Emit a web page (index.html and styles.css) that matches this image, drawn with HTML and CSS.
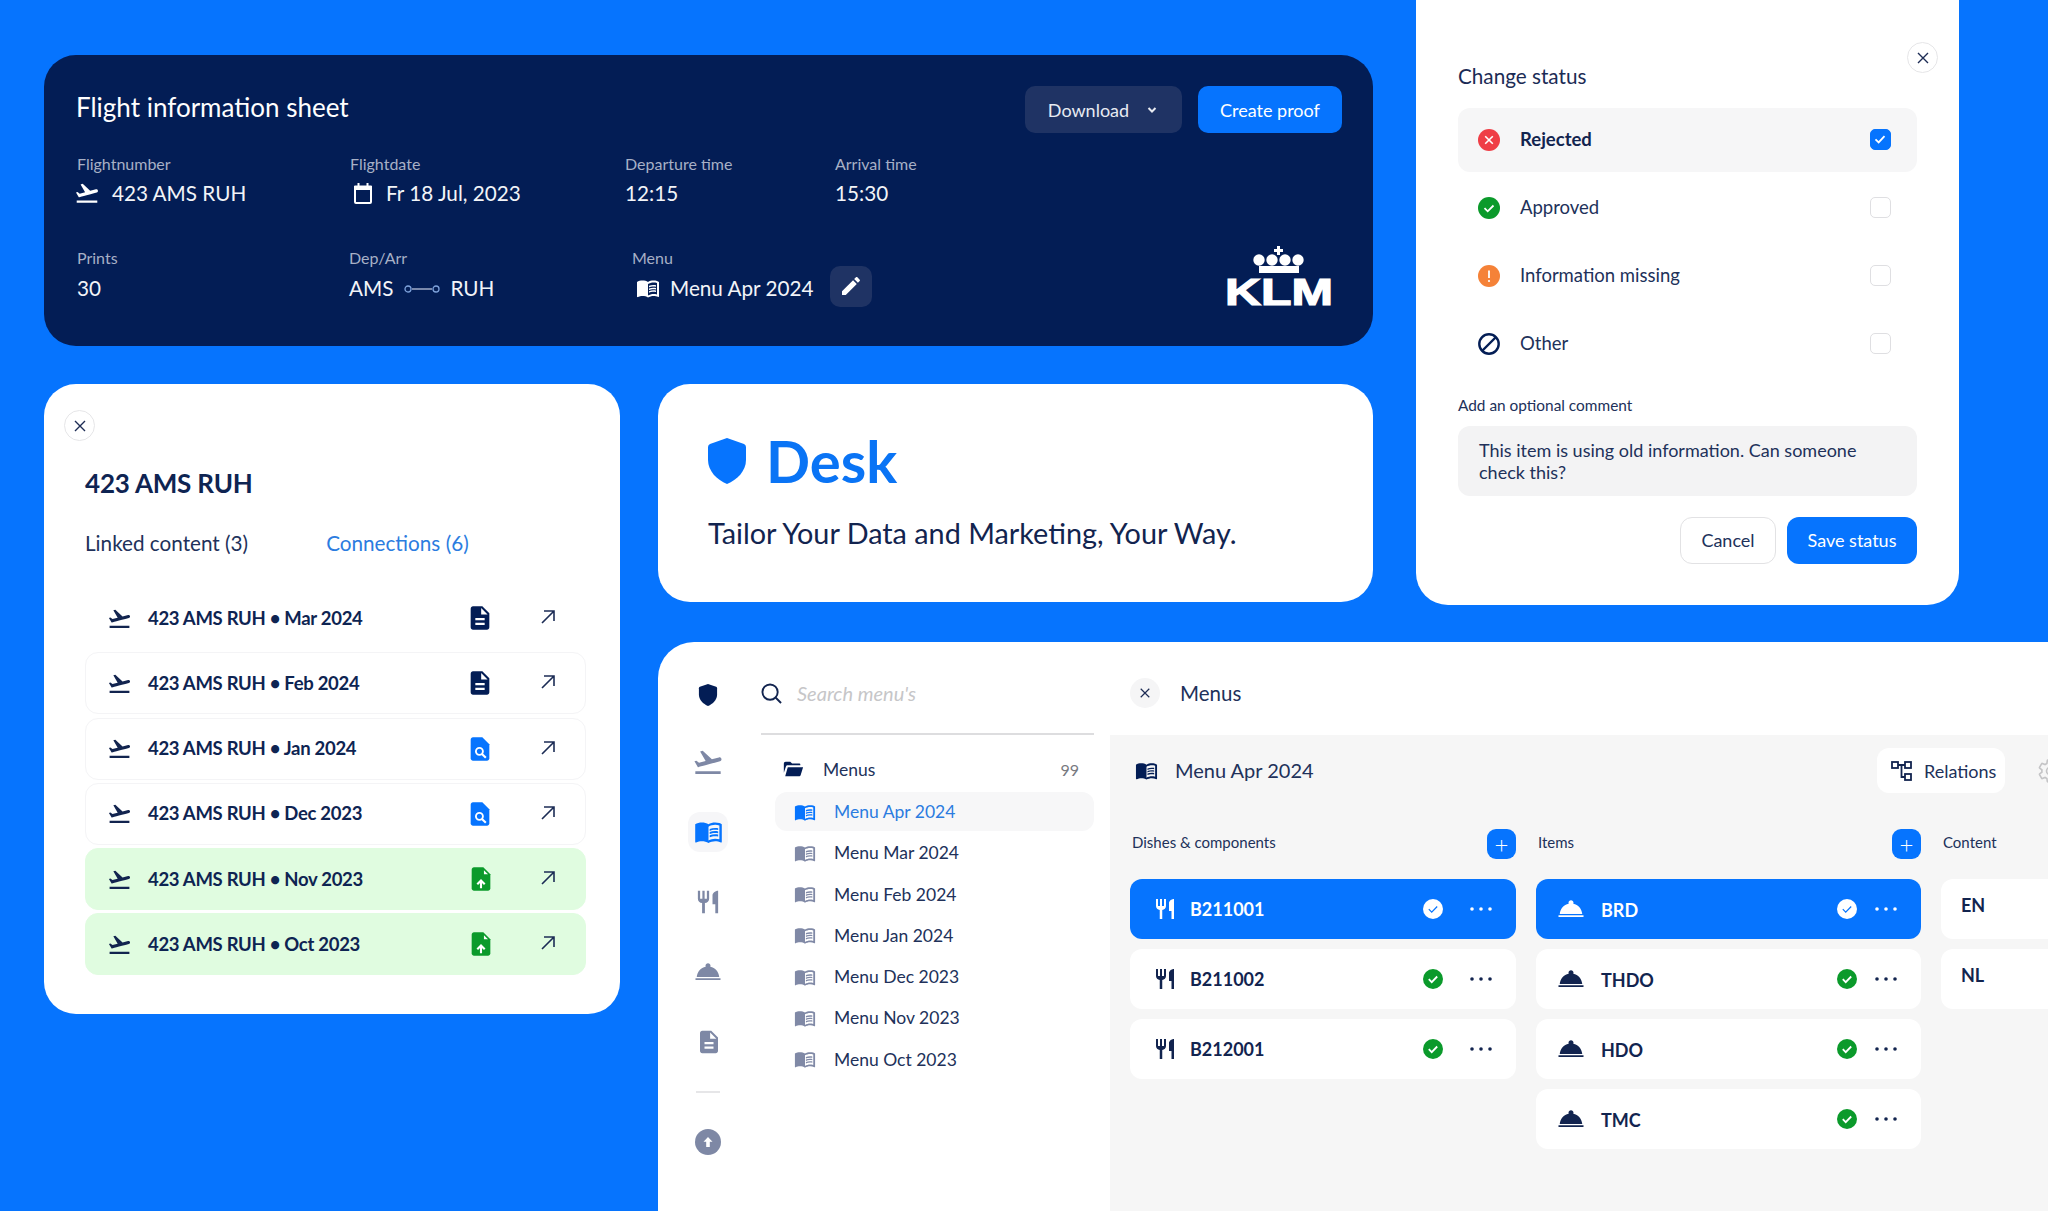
FILE: index.html
```html
<!DOCTYPE html>
<html lang="en">
<head>
    <meta charset="UTF-8">
    <meta name="viewport" content="width=device-width, initial-scale=1.0">
    <title>Desk</title>
    <link rel="stylesheet" href="styles.css">
</head>
<body>
    <svg class="sprite" xmlns="http://www.w3.org/2000/svg">
        <symbol id="i-plane" viewBox="0 0 24 24"><path d="M2.5 19h19v2h-19zm19.57-9.36c-.21-.8-1.04-1.28-1.84-1.06L14.92 10l-6.9-6.43-1.93.51 4.14 7.17-4.97 1.33-1.97-1.54-1.45.39 2.59 4.49s7.12-1.9 16.57-4.43c.81-.23 1.28-1.05 1.07-1.85z"/></symbol>
        <symbol id="i-book" viewBox="0 0 24 24"><path d="M21 5c-1.11-.35-2.33-.5-3.5-.5-1.95 0-4.05.4-5.5 1.5-1.45-1.1-3.55-1.5-5.5-1.5S2.45 4.9 1 6v14.65c0 .25.25.5.5.5.1 0 .15-.05.25-.05C3.1 20.45 5.05 20 6.5 20c1.95 0 4.05.4 5.5 1.5 1.35-.85 3.8-1.5 5.5-1.5 1.65 0 3.35.3 4.75 1.05.1.05.15.05.25.05.25 0 .5-.25.5-.5V6c-.6-.45-1.25-.75-2-1zm0 13.5c-1.1-.35-2.3-.5-3.5-.5-1.7 0-4.15.65-5.5 1.5V8c1.35-.85 3.8-1.5 5.5-1.5 1.2 0 2.4.15 3.5.5v11.5z"/><path d="M17.5 10.5c.88 0 1.73.09 2.5.26V9.24c-.79-.15-1.64-.24-2.5-.24-1.7 0-3.24.29-4.5.83v1.66c1.13-.64 2.7-.99 4.5-.99zM13 12.49v1.66c1.13-.64 2.7-.99 4.5-.99.88 0 1.73.09 2.5.26V11.9c-.79-.15-1.64-.24-2.5-.24-1.7 0-3.24.3-4.5.83zM17.5 14.33c-1.7 0-3.24.29-4.5.83v1.66c1.13-.64 2.7-.99 4.5-.99.88 0 1.73.09 2.5.26v-1.52c-.79-.16-1.64-.24-2.5-.24z"/></symbol>
        <symbol id="i-fork" viewBox="0 0 24 24"><path d="M11 9H9V2H7v7H5V2H3v7c0 2.12 1.66 3.84 3.75 3.97V22h2.5v-9.03C11.34 12.84 13 11.12 13 9V2h-2v7zm5-3v8h2.5v8H21V2c-2.76 0-5 2.24-5 4z"/></symbol>
        <symbol id="i-cloche" viewBox="0 0 24 24"><path d="M2 17h20v1.4H2zm11.84-9.21c.1-.24.16-.51.16-.79 0-1.1-.9-2-2-2s-2 .9-2 2c0 .28.06.55.16.79C6.25 8.6 3.27 11.93 3 16h18c-.27-4.07-3.25-7.4-7.16-8.21z"/></symbol>
        <symbol id="i-doc" viewBox="0 0 24 24"><path d="M14 2H6c-1.1 0-1.99.9-1.99 2L4 20c0 1.1.89 2 1.99 2H18c1.1 0 2-.9 2-2V8l-6-6zm2 16H8v-2h8v2zm0-4H8v-2h8v2zm-3-5V3.5L18.5 9H13z"/></symbol>
        <symbol id="i-find" viewBox="0 0 24 24"><path d="M14 2H6c-1.1 0-2 .9-2 2v16c0 1.100.9 2 2 2h12c1.100 0 2-.9 2-2V8z"/><circle cx="11.500" cy="14" r="3" fill="none" stroke="#fff" stroke-width="1.600"/><path d="M13.700 16.200l3.300 3.300" stroke="#fff" stroke-width="1.800"/></symbol>
        <symbol id="i-upfile" viewBox="0 0 24 24"><path d="M14 2H6c-1.100 0-2 .9-2 2v16c0 1.100.9 2 2 2h12c1.100 0 2-.9 2-2V8z"/><path d="M14.500 4.500V8h3.500z" fill="#fff"/><path d="M12 20v-6.500M8.800 16.500l3.200-3.200 3.200 3.200" fill="none" stroke="#fff" stroke-width="1.800"/></symbol>
        <symbol id="i-arrow" viewBox="0 0 16 16"><path d="M2 14L14 2M4 2h10v10" fill="none" stroke="currentColor" stroke-width="1.6"/></symbol>
        <symbol id="i-close" viewBox="0 0 14 14"><path d="M2 2l10 10M12 2L2 12" fill="none" stroke="currentColor" stroke-width="1.4"/></symbol>
        <symbol id="i-dots" viewBox="0 0 22 4"><circle cx="2" cy="2" r="1.8"/><circle cx="11" cy="2" r="1.8"/><circle cx="20" cy="2" r="1.8"/></symbol>
        <symbol id="i-shield" viewBox="0 0 38 46"><path d="M19 0L36 6Q38 7 38 9V22C38 33 29 42 19 46C9 42 0 33 0 22V9Q0 7 2 6Z"/></symbol>
        <symbol id="i-folder" viewBox="0 0 24 24"><path d="M2 6c0-1.100.9-2 2-2h5l2 2h8c.6 0 1 .4 1 1v1H6.200c-.9 0-1.600.5-1.900 1.400L2 16z"/><path d="M6.300 10H23l-2.600 8.500c-.2.900-1 1.500-1.900 1.500H3.500z"/></symbol>
        <symbol id="i-check" viewBox="0 0 20 20"><circle class="check-disc" cx="10" cy="10" r="10"/><path class="check-mark" d="M5.800 10.200l2.900 2.900 5.500-5.600" fill="none"/></symbol>
    </svg>

    <div class="canvas">
        <section class="flight-card">
            <div class="flight-head">
                <h1 class="flight-title">Flight information sheet</h1>
                <div class="flight-actions">
                    <button class="btn btn-dark">Download
                        <svg class="chevron" viewBox="0 0 10 8"><path d="M1.500 2l3.500 3.500L8.500 2" fill="none" stroke="currentColor" stroke-width="2"/></svg>
                    </button>
                    <button class="btn btn-blue btn-proof">Create proof</button>
                </div>
            </div>
            <div class="meta-row meta-row-top">
                <div class="meta meta-number">
                    <div class="meta-label">Flightnumber</div>
                    <div class="meta-value"><svg class="meta-icon"><use href="#i-plane"/></svg>423 AMS RUH</div>
                </div>
                <div class="meta meta-date">
                    <div class="meta-label">Flightdate</div>
                    <div class="meta-value">
                        <svg class="meta-cal" viewBox="0 0 20 22"><path d="M2 5h16v15a1 1 0 0 1-1 1H3a1 1 0 0 1-1-1z" fill="none" stroke="currentColor" stroke-width="2"/><path d="M1 4.500a1 1 0 0 1 1-1h16a1 1 0 0 1 1 1V8H1z" fill="currentColor"/><path d="M5.500 1v3M14.500 1v3" stroke="currentColor" stroke-width="2"/></svg>
                        Fr 18 Jul, 2023
                    </div>
                </div>
                <div class="meta meta-dep">
                    <div class="meta-label">Departure time</div>
                    <div class="meta-value">12:15</div>
                </div>
                <div class="meta">
                    <div class="meta-label">Arrival time</div>
                    <div class="meta-value">15:30</div>
                </div>
            </div>
            <div class="meta-row meta-row-bottom">
                <div class="meta meta-prints">
                    <div class="meta-label">Prints</div>
                    <div class="meta-value">30</div>
                </div>
                <div class="meta meta-deparr">
                    <div class="meta-label">Dep/Arr</div>
                    <div class="meta-value">AMS
                        <svg class="route" viewBox="0 0 36 10"><path d="M8 5h20" stroke="#c9d2e6" stroke-width="1.200"/><circle cx="4" cy="5" r="3" fill="none" stroke="#7fa3dc" stroke-width="1.300"/><circle cx="32" cy="5" r="3" fill="none" stroke="#7fa3dc" stroke-width="1.300"/></svg>
                        RUH
                    </div>
                </div>
                <div class="meta">
                    <div class="meta-label">Menu</div>
                    <div class="meta-value">
                        <svg class="meta-book"><use href="#i-book"/></svg>Menu Apr 2024
                        <button class="edit-btn"><svg viewBox="0 0 24 24"><path d="M3 17.250V21h3.750L17.810 9.940l-3.750-3.750L3 17.250zM20.710 7.040c.39-.39.39-1.020 0-1.410l-2.340-2.340c-.39-.39-1.020-.39-1.410 0l-1.830 1.830 3.750 3.750 1.830-1.830z"/></svg></button>
                    </div>
                </div>
                <svg class="klm-logo" viewBox="-3 0 112 72">
                    <path d="M51 1h3v3h3v3h-3v3h-3V7h-3V4h3z"/>
                    <circle cx="33" cy="15" r="5.700"/><circle cx="46" cy="15" r="5.700"/><circle cx="59" cy="15" r="5.700"/><circle cx="72" cy="15" r="5.700"/>
                    <rect x="33" y="21" width="40" height="7"/>
                    <text class="klm-text" x="-1" y="60" textLength="108" lengthAdjust="spacingAndGlyphs">KLM</text>
                </svg>
            </div>
        </section>

        <section class="status-card">
            <button class="round-close status-close"><svg><use href="#i-close"/></svg></button>
            <h2 class="status-title">Change status</h2>
            <div class="status-list">
                <div class="status-row is-selected">
                    <svg class="status-icon" viewBox="0 0 22 22"><circle cx="11" cy="11" r="11" fill="#ef3e46"/><path d="M7.200 7.200l7.600 7.600M14.800 7.200l-7.600 7.600" stroke="#fff" stroke-width="1.600"/></svg>
                    <span class="status-name">Rejected</span>
                    <span class="checkbox is-checked"><svg viewBox="0 0 20 20"><path d="M5 10.500l3.500 3.300L15 6.800" fill="none" stroke="#fff" stroke-width="2"/></svg></span>
                </div>
                <div class="status-row">
                    <svg class="status-icon" viewBox="0 0 22 22"><circle cx="11" cy="11" r="11" fill="#0b9a2b"/><path d="M6.500 11.200l3.200 3.100 5.800-5.800" fill="none" stroke="#fff" stroke-width="1.800"/></svg>
                    <span class="status-name">Approved</span>
                    <span class="checkbox"></span>
                </div>
                <div class="status-row">
                    <svg class="status-icon" viewBox="0 0 22 22"><circle cx="11" cy="11" r="11" fill="#f58238"/><path d="M11 5.500v7.500" stroke="#fff" stroke-width="1.800"/><circle cx="11" cy="16" r="1.100" fill="#fff"/></svg>
                    <span class="status-name">Information missing</span>
                    <span class="checkbox"></span>
                </div>
                <div class="status-row">
                    <svg class="status-icon" viewBox="0 0 22 22"><circle cx="11" cy="11" r="9.700" fill="none" stroke="#031d55" stroke-width="2.400"/><path d="M4.500 17.500l13-13" stroke="#031d55" stroke-width="2.400"/></svg>
                    <span class="status-name">Other</span>
                    <span class="checkbox"></span>
                </div>
            </div>
            <div class="comment-label">Add an optional comment</div>
            <div class="comment-box">This item is using old information. Can someone check this?</div>
            <div class="status-actions">
                <button class="btn btn-outline">Cancel</button>
                <button class="btn btn-blue btn-save">Save status</button>
            </div>
        </section>

        <section class="linked-card">
            <button class="round-close linked-close"><svg><use href="#i-close"/></svg></button>
            <h2 class="linked-title">423 AMS RUH</h2>
            <div class="linked-tabs">
                <span>Linked content (3)</span>
                <span class="tab-active">Connections (6)</span>
            </div>
            <div class="linked-list">
                <div class="linked-row is-plain">
                    <svg class="linked-plane"><use href="#i-plane"/></svg>
                    <span class="linked-name">423 AMS RUH • Mar 2024</span>
                    <svg class="linked-doc"><use href="#i-doc"/></svg>
                    <svg class="linked-arrow"><use href="#i-arrow"/></svg>
                </div>
                <div class="linked-row">
                    <svg class="linked-plane"><use href="#i-plane"/></svg>
                    <span class="linked-name">423 AMS RUH • Feb 2024</span>
                    <svg class="linked-doc"><use href="#i-doc"/></svg>
                    <svg class="linked-arrow"><use href="#i-arrow"/></svg>
                </div>
                <div class="linked-row">
                    <svg class="linked-plane"><use href="#i-plane"/></svg>
                    <span class="linked-name">423 AMS RUH • Jan 2024</span>
                    <svg class="linked-doc doc-blue"><use href="#i-find"/></svg>
                    <svg class="linked-arrow"><use href="#i-arrow"/></svg>
                </div>
                <div class="linked-row">
                    <svg class="linked-plane"><use href="#i-plane"/></svg>
                    <span class="linked-name">423 AMS RUH • Dec 2023</span>
                    <svg class="linked-doc doc-blue"><use href="#i-find"/></svg>
                    <svg class="linked-arrow"><use href="#i-arrow"/></svg>
                </div>
                <div class="linked-row is-green">
                    <svg class="linked-plane"><use href="#i-plane"/></svg>
                    <span class="linked-name">423 AMS RUH • Nov 2023</span>
                    <svg class="linked-doc doc-green"><use href="#i-upfile"/></svg>
                    <svg class="linked-arrow"><use href="#i-arrow"/></svg>
                </div>
                <div class="linked-row is-green">
                    <svg class="linked-plane"><use href="#i-plane"/></svg>
                    <span class="linked-name">423 AMS RUH • Oct 2023</span>
                    <svg class="linked-doc doc-green"><use href="#i-upfile"/></svg>
                    <svg class="linked-arrow"><use href="#i-arrow"/></svg>
                </div>
            </div>
        </section>

        <section class="desk-card">
            <div class="desk-brand">
                <svg class="desk-shield"><use href="#i-shield"/></svg>
                <span class="desk-name">Desk</span>
            </div>
            <p class="desk-tagline">Tailor Your Data and Marketing, Your Way.</p>
        </section>

        <section class="menu-card">
            <nav class="rail">
                <svg class="rail-icon rail-shield"><use href="#i-shield"/></svg>
                <svg class="rail-icon rail-plane"><use href="#i-plane"/></svg>
                <span class="rail-active"><svg class="rail-book"><use href="#i-book"/></svg></span>
                <svg class="rail-icon rail-fork"><use href="#i-fork"/></svg>
                <svg class="rail-icon rail-cloche"><use href="#i-cloche"/></svg>
                <svg class="rail-icon rail-doc"><use href="#i-doc"/></svg>
                <span class="rail-divider"></span>
                <span class="rail-upload"><svg viewBox="0 0 12 12"><path d="M6 1L1.500 5.800h2.700V11h3.600V5.800h2.700z"/></svg></span>
            </nav>
            <div class="browser">
                <div class="search">
                    <svg class="search-icon" viewBox="0 0 22 22"><circle cx="9.500" cy="9.500" r="8" fill="none" stroke="currentColor" stroke-width="2"/><path d="M15.500 15.500L21 21" stroke="currentColor" stroke-width="2"/></svg>
                    <span class="search-text">Search menu's</span>
                </div>
                <div class="folder-row">
                    <svg class="folder-icon"><use href="#i-folder"/></svg>
                    <span class="folder-name">Menus</span>
                    <span class="folder-count">99</span>
                </div>
                <div class="menu-list">
                    <div class="menu-row is-active"><svg><use href="#i-book"/></svg>Menu Apr 2024</div>
                    <div class="menu-row"><svg><use href="#i-book"/></svg>Menu Mar 2024</div>
                    <div class="menu-row"><svg><use href="#i-book"/></svg>Menu Feb 2024</div>
                    <div class="menu-row"><svg><use href="#i-book"/></svg>Menu Jan 2024</div>
                    <div class="menu-row"><svg><use href="#i-book"/></svg>Menu Dec 2023</div>
                    <div class="menu-row"><svg><use href="#i-book"/></svg>Menu Nov 2023</div>
                    <div class="menu-row"><svg><use href="#i-book"/></svg>Menu Oct 2023</div>
                </div>
            </div>
            <div class="detail">
                <div class="detail-top">
                    <button class="soft-close"><svg><use href="#i-close"/></svg></button>
                    <span class="detail-crumb">Menus</span>
                </div>
                <div class="detail-body">
                    <div class="detail-head">
                        <svg class="detail-book"><use href="#i-book"/></svg>
                        <span class="detail-title">Menu Apr 2024</span>
                        <button class="relations">
                            <svg viewBox="0 0 24 24"><g fill="none" stroke="currentColor" stroke-width="1.800"><rect x="2" y="3" width="6" height="6"/><rect x="15" y="3" width="6" height="6"/><rect x="15" y="15" width="6" height="6"/><path d="M8 6h7M11.500 6v12H15"/></g></svg>
                            Relations
                        </button>
                        <svg class="gear" viewBox="0 0 24 24"><path d="M19.430 12.980c.04-.32.07-.64.07-.98s-.03-.66-.07-.98l2.110-1.650c.19-.15.24-.42.12-.64l-2-3.460c-.12-.22-.39-.3-.61-.22l-2.490 1c-.52-.4-1.080-.73-1.690-.98l-.38-2.650C14.460 2.180 14.250 2 14 2h-4c-.25 0-.46.18-.49.42l-.38 2.650c-.61.25-1.170.59-1.690.98l-2.490-1c-.23-.09-.49 0-.61.22l-2 3.460c-.13.22-.07.49.12.64l2.110 1.650c-.04.32-.07.65-.07.98s.03.66.07.98l-2.110 1.650c-.19.15-.24.42-.12.64l2 3.460c.12.22.39.3.61.22l2.490-1c.52.4 1.080.73 1.690.98l.38 2.650c.03.24.24.42.49.42h4c.25 0 .46-.18.49-.42l.38-2.650c.61-.25 1.170-.59 1.690-.98l2.490 1c.23.09.49 0 .61-.22l2-3.460c.12-.22.07-.49-.12-.64l-2.110-1.650z" fill="none" stroke="currentColor" stroke-width="1.500"/><circle cx="12" cy="12" r="3.200" fill="none" stroke="currentColor" stroke-width="1.500"/></svg>
                    </div>
                    <div class="columns">
                        <div class="column column-dishes">
                            <div class="column-head"><span>Dishes &amp; components</span><button class="add-btn">+</button></div>
                            <div class="item-card is-selected"><svg class="item-fork"><use href="#i-fork"/></svg><span class="item-name">B211001</span><svg class="item-check"><use href="#i-check"/></svg><svg class="item-dots"><use href="#i-dots"/></svg></div>
                            <div class="item-card"><svg class="item-fork"><use href="#i-fork"/></svg><span class="item-name">B211002</span><svg class="item-check"><use href="#i-check"/></svg><svg class="item-dots"><use href="#i-dots"/></svg></div>
                            <div class="item-card"><svg class="item-fork"><use href="#i-fork"/></svg><span class="item-name">B212001</span><svg class="item-check"><use href="#i-check"/></svg><svg class="item-dots"><use href="#i-dots"/></svg></div>
                        </div>
                        <div class="column column-items">
                            <div class="column-head"><span>Items</span><button class="add-btn">+</button></div>
                            <div class="item-card is-selected"><svg class="item-cloche"><use href="#i-cloche"/></svg><span class="item-name">BRD</span><svg class="item-check"><use href="#i-check"/></svg><svg class="item-dots"><use href="#i-dots"/></svg></div>
                            <div class="item-card"><svg class="item-cloche"><use href="#i-cloche"/></svg><span class="item-name">THDO</span><svg class="item-check"><use href="#i-check"/></svg><svg class="item-dots"><use href="#i-dots"/></svg></div>
                            <div class="item-card"><svg class="item-cloche"><use href="#i-cloche"/></svg><span class="item-name">HDO</span><svg class="item-check"><use href="#i-check"/></svg><svg class="item-dots"><use href="#i-dots"/></svg></div>
                            <div class="item-card"><svg class="item-cloche"><use href="#i-cloche"/></svg><span class="item-name">TMC</span><svg class="item-check"><use href="#i-check"/></svg><svg class="item-dots"><use href="#i-dots"/></svg></div>
                        </div>
                        <div class="column column-content">
                            <div class="column-head"><span>Content</span></div>
                            <div class="lang-card">EN</div>
                            <div class="lang-card">NL</div>
                        </div>
                    </div>
                </div>
            </div>
        </section>
    </div>
</body>
</html>
```

FILE: styles.css
```css
* { box-sizing: border-box; }
html, body { margin: 0; height: 100%; }
body { background-color: #0674fe; font-family: "Lato", "Liberation Sans", sans-serif; color: #12244f; overflow: hidden; }
h1, h2, p { margin: 0; font-weight: 400; }
button { font-family: inherit; border: none; padding: 0; cursor: pointer; }
.sprite { display: none; }

.canvas { display: grid; grid-template-columns: 576px 38px 715px 43px 543px 1fr; grid-template-rows: 346px 259px 606px; padding-left: 44px; height: 1211px; }

/* flight sheet */
.flight-card { grid-column: 1 / 4; grid-row: 1; margin-top: 55px; height: 291px; background-color: #031d55; border-radius: 32px; padding: 31px 31px 0 33px; color: #fff; }
.flight-head { display: flex; justify-content: space-between; align-items: center; height: 47px; }
.flight-title { font-size: 26px; line-height: 32px; margin: -5px 0 0 -1px; }
.flight-actions { display: flex; gap: 16px; }
.btn { height: 47px; border-radius: 10px; font-size: 18px; color: #fff; display: flex; align-items: center; justify-content: center; }
.btn-dark { width: 157px; background-color: #1f3364; gap: 18px; padding-right: 2px; color: #e8ebf2; }
.btn-blue { background-color: #0674fe; }
.btn-proof { width: 144px; }
.chevron { width: 10px; height: 8px; }
.meta-row { display: flex; }
.meta-row-top { margin-top: 21px; }
.meta-row-bottom { margin-top: 42px; }
.meta-label { font-size: 16px; line-height: 20px; color: #a7b0c6; }
.meta-value { display: flex; align-items: center; font-size: 20.7px; line-height: 26px; margin-top: 6px; color: #f2f4f8; }
.meta-row-bottom .meta-value { margin-top: 7px; }
.meta-number { width: 273px; }
.meta-date { width: 275px; }
.meta-dep { width: 210px; }
.meta-prints { width: 272px; }
.meta-deparr { width: 283px; }
.meta-icon { width: 26px; height: 26px; fill: #fff; margin: 0 12px 0 -3px; }
.meta-cal { width: 20px; height: 22px; color: #fff; margin: 0 13px 0 3px; }
.meta-book { width: 24px; height: 24px; fill: #fff; margin: 0 10px 0 4px; }
.route { width: 36px; height: 10px; margin: 2px 10px 0 11px; }
.edit-btn { width: 42px; height: 41px; margin: -10px 0 -6px 17px; border-radius: 10px; background-color: #1f3364; display: flex; align-items: center; justify-content: center; }
.edit-btn svg { width: 24px; height: 24px; fill: #fff; }
.klm-logo { width: 112px; height: 72px; margin: -3px 7px -11px auto; fill: #fff; flex-shrink: 0; }
.klm-text { font-family: "Liberation Sans", sans-serif; font-weight: 700; font-size: 36px; stroke: #fff; stroke-width: 1.2px; }

/* change status */
.status-card { grid-column: 5; grid-row: 1 / 3; position: relative; background-color: #fff; border-radius: 0 0 32px 32px; padding: 62px 42px 0; }
.round-close { width: 31px; height: 31px; border-radius: 50%; background-color: #fff; border: 1.5px solid #e6e6e8; color: #1d2c55; display: flex; align-items: center; justify-content: center; }
.round-close svg { width: 14px; height: 14px; }
.status-close { position: absolute; top: 42px; right: 21px; }
.status-title { font-size: 20.7px; line-height: 28px; color: #1b2b55; }
.status-list { display: flex; flex-direction: column; gap: 4.500px; margin-top: 18px; }
.status-row { display: flex; align-items: center; height: 63.500px; padding: 0 26px 0 20px; border-radius: 12px; font-size: 18.5px; color: #21315a; }
.status-row.is-selected { background-color: #f6f6f7; font-weight: 700; color: #12244f; }
.status-icon { width: 22px; height: 22px; margin-right: 20px; }
.status-name { flex: 1; margin-top: -1px; }
.checkbox { width: 21px; height: 21px; border-radius: 5px; border: 1.5px solid #dfdfe2; background-color: #fff; }
.checkbox.is-checked { background-color: #0674fe; border-color: #0674fe; }
.checkbox svg { display: block; width: 18px; height: 18px; }
.comment-label { margin-top: 19px; font-size: 15.4px; line-height: 20px; color: #21315a; }
.comment-box { margin-top: 11px; height: 70px; padding: 13px 21px; background-color: #f3f3f4; border-radius: 12px; font-size: 18px; line-height: 22px; color: #21315a; }
.status-actions { display: flex; justify-content: flex-end; gap: 11px; margin-top: 21px; }
.btn-outline { width: 96px; background-color: #fff; border: 1.5px solid #e2e2e4; color: #21315a; border-radius: 12px; }
.btn-save { width: 130px; border-radius: 12px; }

/* linked content */
.linked-card { grid-column: 1; grid-row: 2 / 4; margin-top: 38px; height: 630px; background-color: #fff; border-radius: 32px; padding: 26px 34px 0 41px; }
.linked-close { margin-left: -21px; }
.linked-title { margin-top: 26px; font-size: 26px; line-height: 32px; font-weight: 700; letter-spacing: -0.2px; color: #0e2452; }
.linked-tabs { display: flex; gap: 78px; margin-top: 31px; font-size: 20.7px; line-height: 26px; color: #21315a; }
.tab-active { color: #2b7ce0; }
.linked-list { display: flex; flex-direction: column; gap: 3.300px; margin-top: 31px; }
.linked-row { display: flex; align-items: center; height: 62px; padding: 0 27px 0 21px; border: 1.5px solid #f4f4f6; border-radius: 13px; }
.linked-row.is-plain { border-color: transparent; }
.linked-row.is-green { background-color: #e0fce0; border-color: #e0fce0; }
.linked-plane { width: 25px; height: 25px; fill: #12244f; margin-right: 16px; }
.linked-name { flex: 1; margin-top: -1px; font-size: 18.5px; font-weight: 700; letter-spacing: -0.3px; color: #0e2452; }
.linked-doc { width: 28px; height: 28px; fill: #031d55; margin-right: 44px; }
.doc-blue { fill: #0674fe; }
.doc-green { fill: #0b9a2b; margin: 0 43px 0 1px; }
.linked-arrow { width: 16px; height: 16px; color: #1c2c55; margin: -2px 2px 0; }

/* desk */
.desk-card { grid-column: 3; grid-row: 2; margin-top: 38px; height: 218px; background-color: #fff; border-radius: 32px; padding: 42px 0 0 50px; }
.desk-brand { display: flex; align-items: center; height: 70px; gap: 20px; }
.desk-shield { width: 38px; height: 46px; fill: #0674fe; }
.desk-name { font-size: 58px; line-height: 70px; font-weight: 700; color: #0a74f5; }
.desk-tagline { margin-top: 19px; font-size: 28.8px; line-height: 36px; color: #12244f; }

/* menu browser */
.menu-card { grid-column: 3 / 7; grid-row: 3; margin-top: 37px; background-color: #fff; border-radius: 36px 0 0 0; display: flex; }
.rail { width: 100px; flex-shrink: 0; display: flex; flex-direction: column; align-items: center; gap: 30px; padding-top: 33px; }
.rail-icon { width: 40px; height: 40px; fill: #7e88a5; }
.rail-shield { fill: #031d55; padding: 9px 10px; margin-bottom: -3px; }
.rail-plane { padding: 4px; }
.rail-fork { padding: 6.5px; }
.rail-cloche { padding: 5px; }
.rail-doc { padding: 6.5px; margin-left: 2px; }
.rail-active { width: 40px; height: 40px; border-radius: 12px; background-color: #f6f6f8; display: flex; align-items: center; justify-content: center; }
.rail-book { width: 29px; height: 29px; fill: #0674fe; margin-top: -2px; }
.rail-divider { width: 24px; height: 2px; background-color: #e6e6e8; margin-top: -1px; }
.rail-upload { width: 26px; height: 26px; border-radius: 50%; background-color: #7e88a5; margin-top: 6px; display: flex; align-items: center; justify-content: center; }
.rail-upload svg { width: 12px; height: 12px; fill: #fff; }
.browser { width: 333px; margin-left: 3px; flex-shrink: 0; padding-top: 32px; }
.search { display: flex; align-items: center; height: 61px; padding-bottom: 21px; border-bottom: 2px solid #dddddf; gap: 15px; }
.search-icon { width: 21px; height: 21px; color: #12244f; }
.search-text { font-size: 20px; font-style: italic; color: #c6c6c8; }
.folder-row { display: flex; align-items: center; height: 26px; margin: 21px 15px 0 21px; font-size: 17.5px; color: #21315a; }
.folder-icon { width: 22px; height: 22px; fill: #031d55; margin-right: 19px; }
.folder-name { flex: 1; }
.folder-count { font-size: 16px; color: #77797f; }
.menu-list { display: flex; flex-direction: column; gap: 2.300px; margin: 10px 0 0 14px; }
.menu-row { display: flex; align-items: center; height: 39px; padding-left: 19px; border-radius: 12px; font-size: 17.5px; color: #21315a; }
.menu-row svg { width: 22px; height: 22px; fill: #8089a6; margin-right: 18px; }
.menu-row.is-active { background-color: #f7f7f8; color: #2b7ce0; }
.menu-row.is-active svg { fill: #0674fe; }
.detail { width: 938px; margin-left: 16px; flex-shrink: 0; display: flex; flex-direction: column; }
.detail-top { height: 93px; padding: 8px 0 0 20px; display: flex; align-items: center; gap: 20px; }
.soft-close { width: 30px; height: 30px; border-radius: 50%; background-color: #f5f5f6; color: #1d2c55; display: flex; align-items: center; justify-content: center; }
.soft-close svg { width: 12px; height: 12px; }
.detail-crumb { font-size: 20.5px; color: #21315a; }
.detail-body { flex: 1; background-color: #f6f6f6; padding-top: 13px; }
.detail-head { display: flex; align-items: center; height: 45px; padding-left: 25px; }
.detail-book { width: 23px; height: 23px; fill: #031d55; margin-right: 17px; }
.detail-title { font-size: 20px; margin-top: -1px; color: #21315a; flex: 1; }
.relations { display: flex; align-items: center; width: 128px; height: 45px; padding-left: 13px; gap: 10px; background-color: #fff; border-radius: 12px; font-size: 18px; color: #21315a; }
.relations svg { width: 24px; height: 24px; color: #12244f; }
.gear { width: 26px; height: 26px; margin: 0 -15px 0 32px; color: #c4c4c6; flex-shrink: 0; }
.columns { display: flex; gap: 20px; margin-top: 36px; padding-left: 20px; }
.column { width: 385px; flex-shrink: 0; display: flex; flex-direction: column; gap: 10px; }
.column-dishes { width: 386px; }
.column-content { width: 200px; }
.column-head { display: flex; align-items: center; justify-content: space-between; height: 30px; margin-bottom: 10px; padding-left: 2px; font-size: 15px; color: #21315a; }
.column-head span { margin-top: -4px; }
.add-btn { width: 29px; height: 30px; border-radius: 9px; background-color: #0674fe; color: #fff; font-size: 24px; line-height: 28px; font-weight: 300; }
.item-card { --disc: #0b9a2b; --mark: #fff; --mark-width: 1.8px; display: flex; align-items: center; height: 60px; padding: 0 24px 0 23px; background-color: #fff; border-radius: 12px; color: #12244f; }
.item-card.is-selected { --disc: #fff; --mark: #0674fe; --mark-width: 1.2px; background-color: #0674fe; color: #fff; }
.item-fork { width: 24px; height: 24px; fill: currentColor; margin-right: 13px; }
.item-cloche { width: 30px; height: 30px; fill: currentColor; margin: 0 15px 0 -3px; }
.item-name { flex: 1; font-size: 18px; font-weight: 700; }
.column-items .item-name { padding-top: 2px; }
.item-check { width: 20px; height: 20px; margin-right: 27px; }
.column-items .item-check { margin-right: 18px; }
.item-dots { width: 22px; height: 4px; fill: currentColor; }
.check-disc { fill: var(--disc); }
.check-mark { stroke: var(--mark); stroke-width: var(--mark-width); }
.lang-card { height: 60px; padding: 14px 0 0 20px; background-color: #fff; border-radius: 12px 0 0 12px; font-size: 18px; font-weight: 700; line-height: 24px; color: #12244f; }
```
